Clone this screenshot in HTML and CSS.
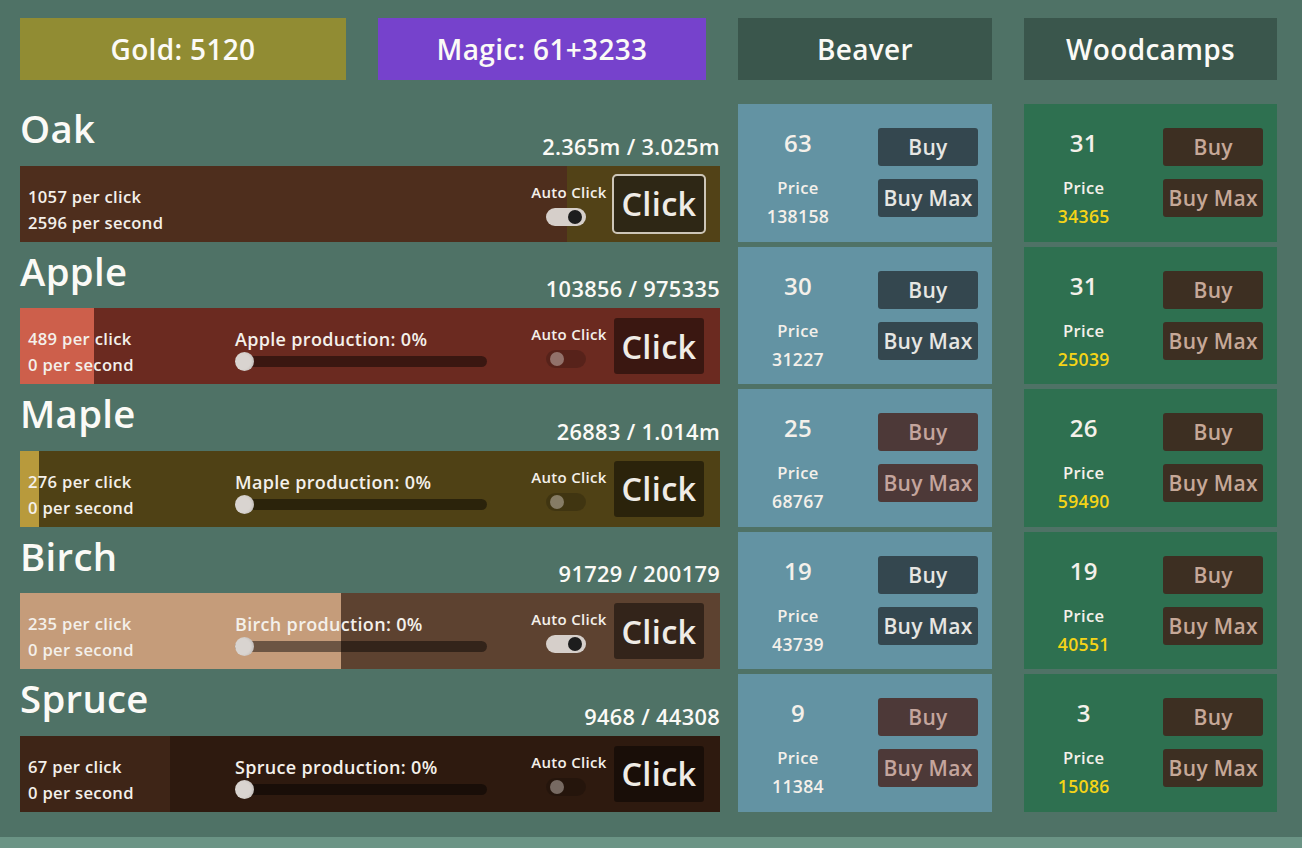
FILE: index.html
```html
<!DOCTYPE html>
<html lang="en">
<head>
<meta charset="utf-8">
<title>Woodcutter</title>
<link rel="stylesheet" href="styles.css">
</head>
<body>
<div class="app">
  <div class="col col-trees">
    <div class="head-row">
      <div class="head gold">Gold: 5120</div>
      <div class="head magic">Magic: 61+3233</div>
    </div>
    <div class="list">
      <div class="tree">
        <div class="tree-top">
          <div class="tree-name">Oak</div>
          <div class="tree-amount">2.365m / 3.025m</div>
        </div>
        <div class="bar bar-oak">
          <div class="fill" style="width:78.2%"></div>
          <div class="stats"><div>1057 per click</div><div>2596 per second</div></div>
          <div class="spacer"></div>
          <div class="auto"><div class="auto-label">Auto Click</div><div class="toggle on"><span class="knob"></span></div></div>
          <div class="click focused">Click</div>
        </div>
      </div>
      <div class="tree">
        <div class="tree-top">
          <div class="tree-name">Apple</div>
          <div class="tree-amount">103856 / 975335</div>
        </div>
        <div class="bar bar-apple">
          <div class="fill" style="width:10.6%"></div>
          <div class="stats"><div>489 per click</div><div>0 per second</div></div>
          <div class="prod"><div class="prod-label">Apple production: 0%</div><div class="slider"><span class="grab"></span></div></div>
          <div class="spacer"></div>
          <div class="auto"><div class="auto-label">Auto Click</div><div class="toggle"><span class="knob"></span></div></div>
          <div class="click">Click</div>
        </div>
      </div>
      <div class="tree">
        <div class="tree-top">
          <div class="tree-name">Maple</div>
          <div class="tree-amount">26883 / 1.014m</div>
        </div>
        <div class="bar bar-maple">
          <div class="fill" style="width:2.65%"></div>
          <div class="stats"><div>276 per click</div><div>0 per second</div></div>
          <div class="prod"><div class="prod-label">Maple production: 0%</div><div class="slider"><span class="grab"></span></div></div>
          <div class="spacer"></div>
          <div class="auto"><div class="auto-label">Auto Click</div><div class="toggle"><span class="knob"></span></div></div>
          <div class="click">Click</div>
        </div>
      </div>
      <div class="tree">
        <div class="tree-top">
          <div class="tree-name">Birch</div>
          <div class="tree-amount">91729 / 200179</div>
        </div>
        <div class="bar bar-birch">
          <div class="fill" style="width:45.8%"></div>
          <div class="stats"><div>235 per click</div><div>0 per second</div></div>
          <div class="prod"><div class="prod-label">Birch production: 0%</div><div class="slider"><span class="grab"></span></div></div>
          <div class="spacer"></div>
          <div class="auto"><div class="auto-label">Auto Click</div><div class="toggle on"><span class="knob"></span></div></div>
          <div class="click">Click</div>
        </div>
      </div>
      <div class="tree">
        <div class="tree-top">
          <div class="tree-name">Spruce</div>
          <div class="tree-amount">9468 / 44308</div>
        </div>
        <div class="bar bar-spruce">
          <div class="fill" style="width:21.4%"></div>
          <div class="stats"><div>67 per click</div><div>0 per second</div></div>
          <div class="prod"><div class="prod-label">Spruce production: 0%</div><div class="slider"><span class="grab"></span></div></div>
          <div class="spacer"></div>
          <div class="auto"><div class="auto-label">Auto Click</div><div class="toggle"><span class="knob"></span></div></div>
          <div class="click">Click</div>
        </div>
      </div>
    </div>
  </div>

  <div class="col col-beaver">
    <div class="head dark">Beaver</div>
    <div class="list">
      <div class="card beaver">
        <div class="info"><div class="count">63</div><div class="price-label">Price</div><div class="price">138158</div></div>
        <div class="btns"><div class="btn">Buy</div><div class="btn">Buy Max</div></div>
      </div>
      <div class="card beaver">
        <div class="info"><div class="count">30</div><div class="price-label">Price</div><div class="price">31227</div></div>
        <div class="btns"><div class="btn">Buy</div><div class="btn">Buy Max</div></div>
      </div>
      <div class="card beaver">
        <div class="info"><div class="count">25</div><div class="price-label">Price</div><div class="price">68767</div></div>
        <div class="btns"><div class="btn off">Buy</div><div class="btn off">Buy Max</div></div>
      </div>
      <div class="card beaver">
        <div class="info"><div class="count">19</div><div class="price-label">Price</div><div class="price">43739</div></div>
        <div class="btns"><div class="btn">Buy</div><div class="btn">Buy Max</div></div>
      </div>
      <div class="card beaver">
        <div class="info"><div class="count">9</div><div class="price-label">Price</div><div class="price">11384</div></div>
        <div class="btns"><div class="btn off">Buy</div><div class="btn off">Buy Max</div></div>
      </div>
    </div>
  </div>

  <div class="col col-camps">
    <div class="head dark">Woodcamps</div>
    <div class="list">
      <div class="card camp">
        <div class="info"><div class="count">31</div><div class="price-label">Price</div><div class="price gold-price">34365</div></div>
        <div class="btns"><div class="btn camp-btn">Buy</div><div class="btn camp-btn">Buy Max</div></div>
      </div>
      <div class="card camp">
        <div class="info"><div class="count">31</div><div class="price-label">Price</div><div class="price gold-price">25039</div></div>
        <div class="btns"><div class="btn camp-btn">Buy</div><div class="btn camp-btn">Buy Max</div></div>
      </div>
      <div class="card camp">
        <div class="info"><div class="count">26</div><div class="price-label">Price</div><div class="price gold-price">59490</div></div>
        <div class="btns"><div class="btn camp-btn">Buy</div><div class="btn camp-btn">Buy Max</div></div>
      </div>
      <div class="card camp">
        <div class="info"><div class="count">19</div><div class="price-label">Price</div><div class="price gold-price">40551</div></div>
        <div class="btns"><div class="btn camp-btn">Buy</div><div class="btn camp-btn">Buy Max</div></div>
      </div>
      <div class="card camp">
        <div class="info"><div class="count">3</div><div class="price-label">Price</div><div class="price gold-price">15086</div></div>
        <div class="btns"><div class="btn camp-btn">Buy</div><div class="btn camp-btn">Buy Max</div></div>
      </div>
    </div>
  </div>
</div>
<div class="footer"></div>
</body>
</html>
```

FILE: styles.css
```css
* { box-sizing: border-box; }
html, body { margin: 0; padding: 0; }
body {
  width: 1302px;
  height: 848px;
  overflow: hidden;
  background: #4f7266;
  font-family: "Open Sans", "Noto Sans", sans-serif;
  font-weight: 600;
  letter-spacing: 0.02em;
  color: #f4f0ea;
}
.app {
  height: 837px;
  display: flex;
  padding: 18px 0 0 20px;
}
.col { display: flex; flex-direction: column; gap: 24px; }
.col-trees { width: 700px; }
.col-beaver { width: 254px; margin-left: 18px; }
.col-camps { width: 253px; margin-left: 32px; }
.head-row { display: flex; gap: 32px; }
.head {
  height: 62px;
  display: flex;
  align-items: center;
  justify-content: center;
  font-size: 28px;
  color: #fbfaf6;
}
.gold { width: 326px; background: #918c33; }
.magic { width: 328px; background: #7642cc; }
.dark { background: #3a564c; }
.list { display: flex; flex-direction: column; gap: 5px; }

.tree { height: 137.6px; display: flex; flex-direction: column; }
.tree-top { height: 61.6px; display: flex; justify-content: space-between; }
.tree-name { font-size: 38.3px; line-height: 46px; margin-top: 1px; color: #fbfaf6; }
.tree-amount { align-self: flex-end; font-size: 21.8px; line-height: 26px; margin-bottom: 6px; color: #fbfaf6; }

.bar {
  position: relative;
  height: 76px;
  display: flex;
  align-items: center;
  padding: 0 16px 0 8px;
}
.fill { position: absolute; left: 0; top: 0; bottom: 0; }
.bar > *:not(.fill) { position: relative; }
.bar-oak { background: #524217; }
.bar-oak .fill { background: #4e2e1d; }
.bar-apple { background: #6b2a20; }
.bar-apple .fill { background: #cd5f4b; }
.bar-maple { background: #4f4115; }
.bar-maple .fill { background: #b89a3c; }
.bar-birch { background: #5d4230; }
.bar-birch .fill { background: #c59c7a; }
.bar-spruce { background: #2e1a0f; }
.bar-spruce .fill { background: #3e2517; }

.stats {
  width: 207px;
  align-self: flex-start;
  margin-top: 18px;
  font-size: 16.6px;
  line-height: 26px;
}
.prod { width: 252px; align-self: flex-start; margin-top: 19px; }
.prod-label { font-size: 18px; line-height: 24px; }
.slider {
  margin-top: 5px;
  height: 11px;
  border-radius: 6px;
  background: rgba(0, 0, 0, 0.45);
  position: relative;
}
.grab {
  position: absolute;
  left: 0;
  top: -4px;
  width: 19px;
  height: 19px;
  border-radius: 50%;
  background: #d9d4d0;
  box-shadow: inset -2px 0 2px rgba(0,0,0,0.08);
}
.spacer { flex: 1; }
.auto {
  width: 84px;
  align-self: flex-start;
  margin-top: 16px;
  display: flex;
  flex-direction: column;
  align-items: center;
}
.auto-label { font-size: 15px; line-height: 20px; white-space: nowrap; }
.toggle {
  margin-top: 6px;
  margin-left: -6px;
  width: 40px;
  height: 18px;
  border-radius: 9px;
  background: rgba(0, 0, 0, 0.18);
  position: relative;
}
.knob {
  position: absolute;
  left: 4px;
  top: 2px;
  width: 14px;
  height: 14px;
  border-radius: 50%;
  background: rgba(220, 210, 205, 0.45);
}
.toggle.on { background: #d6cfca; }
.toggle.on .knob { left: auto; right: 4px; background: #1d1d1d; }
.click {
  margin-left: 3px;
  width: 90px;
  height: 56px;
  display: flex;
  align-items: center;
  justify-content: center;
  font-size: 32.5px;
  background: rgba(0, 0, 0, 0.45);
  border-radius: 3px;
  color: #f0ece6;
}
.click.focused {
  background: #2e2715;
  outline: 2px solid #cdc6b8;
  border-radius: 3px;
}

.card {
  height: 137.6px;
  display: flex;
  padding: 24px 14px 0 0;
}
.beaver { background: #6393a3; }
.camp { background: #2e7050; }
.info {
  width: 120px;
  display: flex;
  flex-direction: column;
  align-items: center;
}
.count { font-size: 24px; line-height: 30px; }
.price-label { font-size: 16.6px; line-height: 22px; margin-top: 19px; }
.price { font-size: 17.6px; line-height: 24px; margin-top: 5px; }
.gold-price { color: #f5d417; }
.btns { margin-left: 20px; width: 100px; display: flex; flex-direction: column; gap: 13px; }
.btn {
  height: 38px;
  border-radius: 3px;
  background: #34474f;
  display: flex;
  align-items: center;
  justify-content: center;
  font-size: 21px;
  color: #e6e6e3;
  white-space: nowrap;
}
.btn.off { background: #4d3938; color: #c4a59d; }
.btn.camp-btn { background: #3d2f22; color: #c6a898; }
.footer { height: 11px; background: #6b9485; }
```
